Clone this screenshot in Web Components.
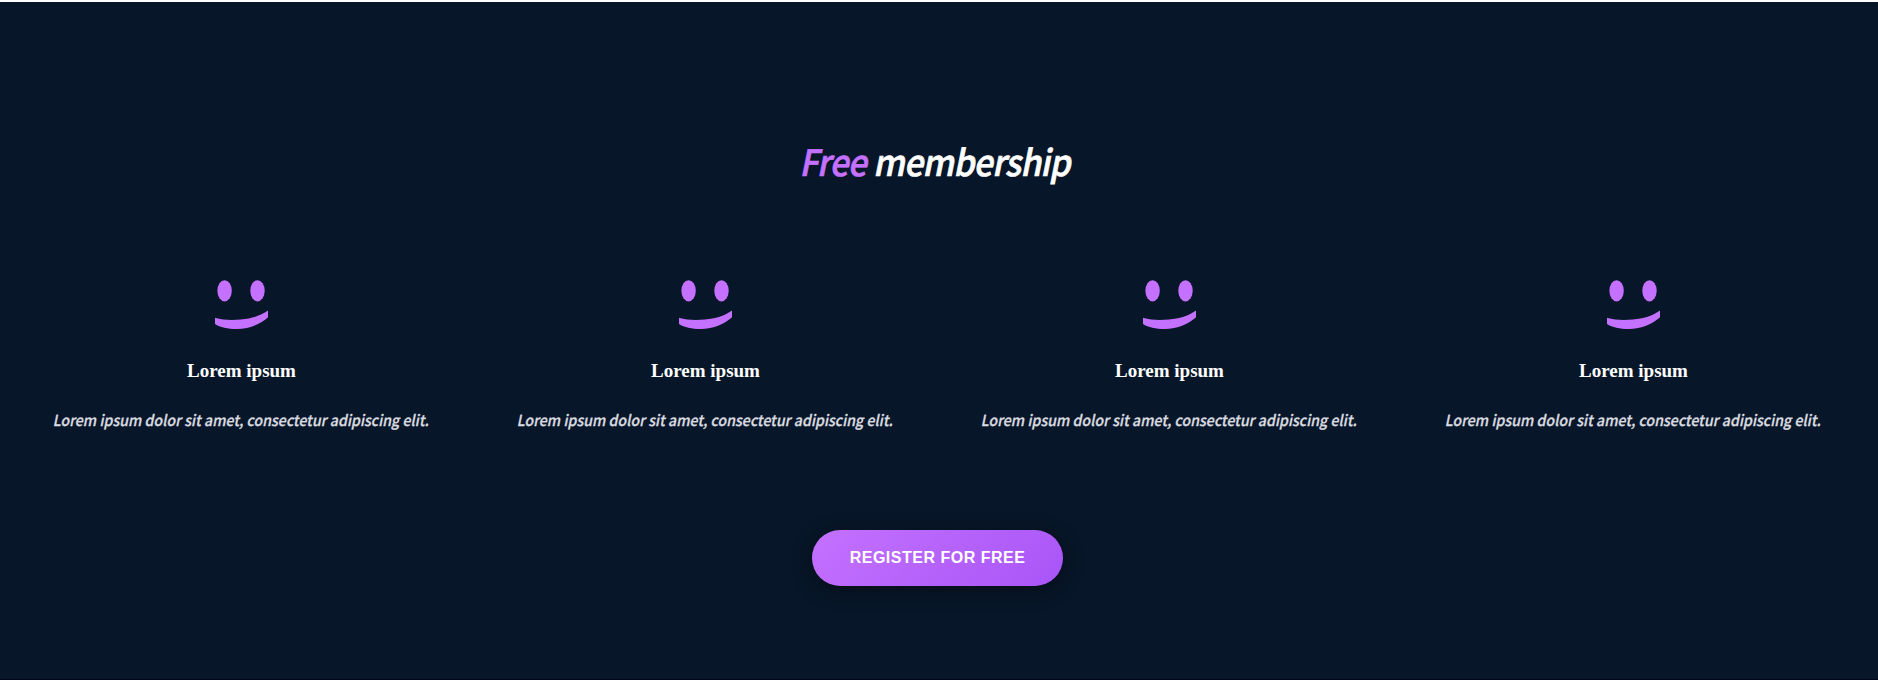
<!DOCTYPE html>
<html lang="en"><head><meta charset="utf-8"><title>Free membership</title>
<style>html,body{margin:0;background:#fff}</style></head>
<body>
<membership-section>
  <span slot="accent">Free</span><span slot="title">membership</span>
  <benefit-card><span slot="name">Lorem ipsum</span>Lorem ipsum dolor sit amet, consectetur adipiscing elit.</benefit-card>
  <benefit-card><span slot="name">Lorem ipsum</span>Lorem ipsum dolor sit amet, consectetur adipiscing elit.</benefit-card>
  <benefit-card><span slot="name">Lorem ipsum</span>Lorem ipsum dolor sit amet, consectetur adipiscing elit.</benefit-card>
  <benefit-card><span slot="name">Lorem ipsum</span>Lorem ipsum dolor sit amet, consectetur adipiscing elit.</benefit-card>
  <pill-button slot="action">REGISTER FOR FREE</pill-button>
</membership-section>
<script>
const define = (name, html) => customElements.define(name, class extends HTMLElement {
  constructor() {
    super();
    this.attachShadow({ mode: 'open' }).innerHTML = html;
  }
});

define('smile-icon', `
<style>:host{display:block;width:53px;height:50px} svg{display:block;fill:#c471ff}</style>
<svg width="53" height="50" viewBox="0 0 53 50">
  <ellipse cx="9.6" cy="10.8" rx="7.2" ry="10.6"/>
  <ellipse cx="42.5" cy="10.8" rx="7.2" ry="10.6"/>
  <path d="M0 37.800C8 40.300 17 40.100 26 39.600C36 38.900 46 35.700 53 30.600V37.200C46 43.700 35 48.900 21.500 49C13 49 5 47.500 0 44Z"/>
</svg>`);

define('benefit-card', `
<style>
:host{display:flex;flex-direction:column;align-items:center;color:#fff}
h3{margin:29px 0 0;font:bold 19px/24px "Liberation Serif",serif}
p{margin:24px 0 0 2px;font:500 15.2px/24px "Noto Sans CJK SC",sans-serif;color:#dcdde0;-webkit-text-stroke:.3px currentColor;white-space:nowrap;transform:scaleX(.935) skewX(-12deg)}
</style>
<smile-icon></smile-icon><h3><slot name="name"></slot></h3><p><slot></slot></p>`);

define('pill-button', `
<style>
:host{display:block}
button{display:block;border:0;width:251px;height:56px;padding:0;border-radius:28px;color:#fff;
background:linear-gradient(135deg,#c471ff,#a855f7);box-shadow:0 4px 20px rgba(0,0,0,.4);
font:bold 16px/20px "Liberation Sans",sans-serif;letter-spacing:.5px}
</style><button><slot></slot></button>`);

define('membership-section', `
<style>
:host{display:flex;flex-direction:column;align-items:center;box-sizing:border-box;height:680px;padding:132px 3px 0 0;
border-top:2px solid #fff;border-bottom:1px solid #03031a;background:#071628}
h2{margin:0 0 0 1px;font:500 36px/52px "Noto Sans CJK SC",sans-serif;letter-spacing:-.8px;color:#fff;-webkit-text-stroke:.7px currentColor;white-space:nowrap;transform:scaleX(.935) skewX(-12deg)}
.accent{color:#c471ff}
.grid{display:grid;grid-template-columns:repeat(4,464px);margin-top:94px}
.action{margin-top:99px}
</style>
<h2><span class="accent"><slot name="accent"></slot></span> <slot name="title"></slot></h2>
<div class="grid"><slot></slot></div>
<div class="action"><slot name="action"></slot></div>`);
</script>
</body></html>
